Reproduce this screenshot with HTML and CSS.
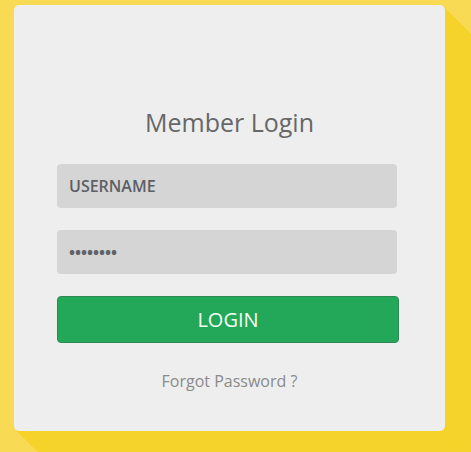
FILE: index.html
```html
<!DOCTYPE html>
<html lang="en">
<head>
<meta charset="utf-8">
<title>Member Login</title>
<link rel="stylesheet" href="styles.css">
</head>
<body>
  <main class="card">
    <h1 class="title">Member Login</h1>
    <form class="form">
      <div class="field">USERNAME</div>
      <div class="field field-pass">••••••••</div>
      <button type="button" class="btn">LOGIN</button>
    </form>
    <a class="forgot">Forgot Password ?</a>
  </main>
</body>
</html>
```
FILE: styles.css
```css
html {
  background: #f8da55;
  height: 100%;
}
body {
  margin: 0;
  box-sizing: border-box;
  height: 100%;
  overflow: hidden;
  padding: 5px 0 0 14px;
  background: #f8da55;
  font-family: "Open Sans", "Liberation Sans", sans-serif;
}
.card {
  box-sizing: border-box;
  width: 431px;
  height: 426px;
  background: #eeeeee;
  border-radius: 5px;
  padding: 100px 0 0 43px;
  display: flex;
  flex-direction: column;
  box-shadow:
    1px 1px #f5d32a, 2px 2px #f5d32a, 3px 3px #f5d32a, 4px 4px #f5d32a,
    5px 5px #f5d32a, 6px 6px #f5d32a, 7px 7px #f5d32a, 8px 8px #f5d32a,
    9px 9px #f5d32a, 10px 10px #f5d32a, 11px 11px #f5d32a, 12px 12px #f5d32a,
    13px 13px #f5d32a, 14px 14px #f5d32a, 15px 15px #f5d32a, 16px 16px #f5d32a,
    17px 17px #f5d32a, 18px 18px #f5d32a, 19px 19px #f5d32a, 20px 20px #f5d32a,
    21px 21px #f5d32a, 22px 22px #f5d32a, 23px 23px #f5d32a, 24px 24px #f5d32a,
    25px 25px #f5d32a, 26px 26px #f5d32a, 27px 27px #f5d32a, 28px 28px #f5d32a,
    29px 29px #f5d32a, 30px 30px #f5d32a, 31px 31px #f5d32a, 32px 32px #f5d32a;
}
.title {
  margin: 0 0 0 -43px;
  font-size: 25px;
  font-weight: 400;
  line-height: 34px;
  color: #676767;
  text-align: center;
}
.form {
  margin-top: 25px;
  width: 342px;
  display: flex;
  flex-direction: column;
}
.field {
  width: 340px;
  height: 44px;
  box-sizing: border-box;
  background: #d5d5d5;
  border-radius: 4px;
  padding: 0 12px;
  display: flex;
  align-items: center;
  font-size: 16px;
  font-weight: 600;
  color: #5b5f66;
}
.field-pass {
  margin-top: 22px;
  font-size: 16px;
  font-weight: 700;
  color: #606266;
}
.btn {
  margin-top: 22px;
  width: 342px;
  height: 47px;
  box-sizing: border-box;
  background: #23a85a;
  border: 1px solid #2e8a55;
  border-radius: 4px;
  color: #f4fff6;
  font-family: inherit;
  font-size: 20px;
  font-weight: 400;
  padding: 0;
}
.forgot {
  margin: 28px 0 0 -43px;
  text-align: center;
  font-size: 16px;
  line-height: 20px;
  color: #8a8a8a;
}
```
